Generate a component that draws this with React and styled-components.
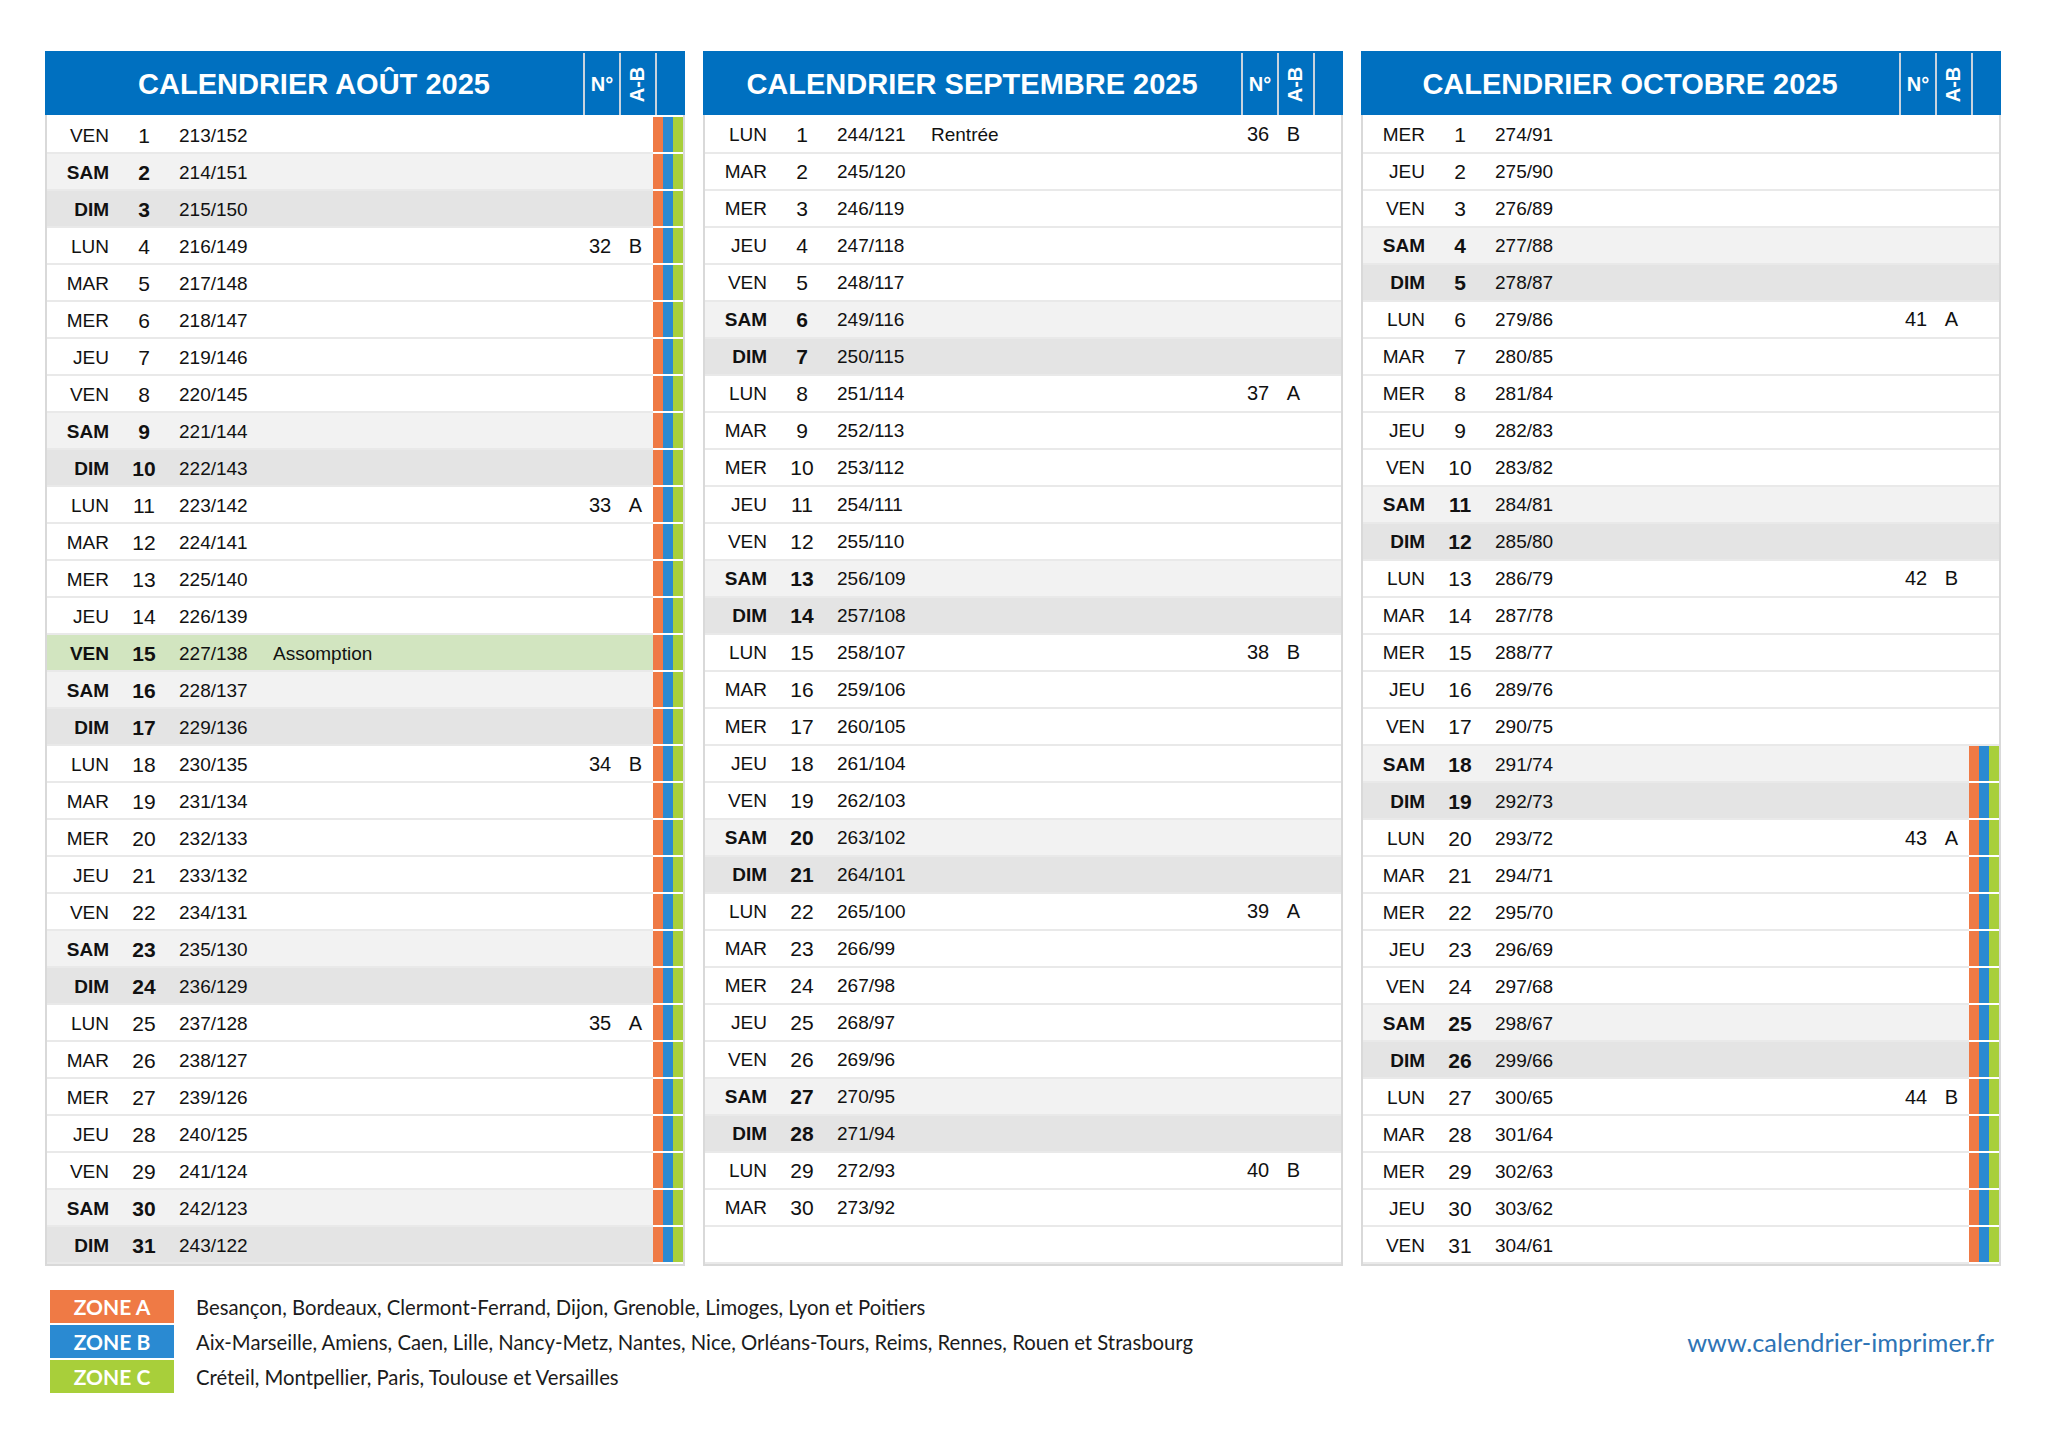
import React from 'react';
import styled, { createGlobalStyle } from 'styled-components';

const GlobalStyle = createGlobalStyle`
  html, body {
    margin: 0;
    padding: 0;
    background: #fff;
  }
  body {
    font-family: 'Liberation Sans', Arial, sans-serif;
    color: #111;
  }
`;

const ZONES = [
  { id: 'A', color: '#ef7a45', towns: 'Besançon, Bordeaux, Clermont-Ferrand, Dijon, Grenoble, Limoges, Lyon et Poitiers' },
  { id: 'B', color: '#2a8ad2', towns: 'Aix-Marseille, Amiens, Caen, Lille, Nancy-Metz, Nantes, Nice, Orléans-Tours, Reims, Rennes, Rouen et Strasbourg' },
  { id: 'C', color: '#a8cf3a', towns: 'Créteil, Montpellier, Paris, Toulouse et Versailles' },
];

const DAY_NAMES = ['DIM', 'LUN', 'MAR', 'MER', 'JEU', 'VEN', 'SAM'];

const MONTHS = [
  { title: 'CALENDRIER AOÛT 2025', length: 31, firstDow: 5, firstDoy: 213, events: { 15: { label: 'Assomption', holiday: true } }, vacation: () => true },
  { title: 'CALENDRIER SEPTEMBRE 2025', length: 30, firstDow: 1, firstDoy: 244, events: { 1: { label: 'Rentrée' } }, vacation: () => false },
  { title: 'CALENDRIER OCTOBRE 2025', length: 31, firstDow: 3, firstDoy: 274, events: {}, vacation: (d) => d >= 18 },
];

const Page = styled.div`
  width: 2048px;
  height: 1448px;
  box-sizing: border-box;
  padding: 51px 0 0 45px;
`;

const Months = styled.div`
  display: flex;
  gap: 18px;
`;

const Panel = styled.section`
  width: 640px;
  display: flex;
  flex-direction: column;
`;

const Header = styled.header`
  display: grid;
  grid-template-columns: 538px 36px 36px 1fr;
  height: 64px;
  box-sizing: border-box;
  padding-top: 2px;
  background: #0070c0;
  color: #fff;
  font-weight: bold;
`;

const HeadCell = styled.div`
  display: flex;
  align-items: center;
  justify-content: center;
  border-left: ${(p) => (p.$divider ? '2px solid #c9d3de' : 'none')};
  font-size: ${(p) => (p.$title ? '29px' : '20px')};
`;

const Vertical = styled.span`
  display: inline-block;
  transform: rotate(-90deg);
  white-space: nowrap;
`;

const Body = styled.div`
  border: 2px solid #d9d9d9;
  border-top: none;
  padding-top: 2px;
  background: #fff;
`;

const ROW_BG = { sat: '#f2f2f2', sun: '#e4e4e4', holiday: '#d2e5c0', normal: '#fff' };

const Row = styled.div`
  display: grid;
  grid-template-columns: 62px 70px 94px 1fr 36px 35px 30px;
  height: 37px;
  box-sizing: border-box;
  padding-bottom: 2px;
  background: ${(p) => ROW_BG[p.$kind]};
  box-shadow: inset 0 -2px 0 #e9e9e9;
  font-weight: ${(p) => (p.$kind === 'normal' ? 'normal' : 'bold')};
`;

const Cell = styled.div`
  display: flex;
  align-items: center;
  justify-content: ${(p) => p.$align || 'flex-start'};
  font-size: ${(p) => p.$size || '19px'};
  font-weight: ${(p) => (p.$plain ? 'normal' : 'inherit')};
  white-space: nowrap;
`;

const Stripes = styled.div`
  display: flex;
  height: 37px;
  box-sizing: border-box;
  border-bottom: 2px solid #fff;
`;

const Stripe = styled.span`
  width: 10px;
  background: ${(p) => p.$color};
`;

const Footer = styled.footer`
  width: 1956px;
  box-sizing: border-box;
  display: flex;
  justify-content: space-between;
  align-items: center;
  margin-top: 24px;
  padding: 0 7px 0 5px;
`;

const Zones = styled.div`
  display: flex;
  flex-direction: column;
  gap: 2px;
`;

const ZoneRow = styled.div`
  display: flex;
  align-items: center;
  gap: 22px;
  height: 33px;
`;

const ZoneBadge = styled.div`
  width: 124px;
  height: 33px;
  display: flex;
  align-items: center;
  justify-content: center;
  background: ${(p) => p.$color};
  color: #fff;
  font-family: Lato, 'Open Sans', sans-serif;
  font-weight: bold;
  font-size: 21px;
`;

const ZoneText = styled.span`
  font-family: Lato, 'Open Sans', sans-serif;
  font-size: 20.3px;
  color: #1b1b1b;
`;

const Site = styled.span`
  font-family: Lato, 'Open Sans', sans-serif;
  font-size: 25.3px;
  color: #2e74b5;
`;

const DayRow = ({ month, day }) => {
  if (day > month.length) {
    return <Row $kind="normal" />;
  }
  const dow = (month.firstDow + day - 1) % 7;
  const doy = month.firstDoy + day - 1;
  const event = month.events[day];
  let kind = 'normal';
  if (event && event.holiday) kind = 'holiday';
  else if (dow === 6) kind = 'sat';
  else if (dow === 0) kind = 'sun';
  const week = dow === 1 ? Math.floor((doy - 1 + 10) / 7) : null;

  return (
    <Row $kind={kind}>
      <Cell $align="flex-end">{DAY_NAMES[dow]}</Cell>
      <Cell $align="center" $size="21px">{day}</Cell>
      <Cell $plain>{doy}/{365 - doy}</Cell>
      <Cell $plain>{event ? event.label : ''}</Cell>
      <Cell $plain $align="center" $size="20px">{week}</Cell>
      <Cell $plain $align="center" $size="20px">{week ? (week % 2 === 0 ? 'B' : 'A') : ''}</Cell>
      {month.vacation(day) ? (
        <Stripes>
          {ZONES.map((z) => (
            <Stripe key={z.id} $color={z.color} />
          ))}
        </Stripes>
      ) : (
        <div />
      )}
    </Row>
  );
};

const MonthPanel = ({ month }) => {
  const days = Array.from({ length: 31 }, (_, i) => i + 1);
  return (
    <Panel>
      <Header>
        <HeadCell $title>{month.title}</HeadCell>
        <HeadCell $divider>N°</HeadCell>
        <HeadCell $divider>
          <Vertical>A-B</Vertical>
        </HeadCell>
        <HeadCell $divider />
      </Header>
      <Body>
        {days.map((d) => (
          <DayRow key={d} month={month} day={d} />
        ))}
      </Body>
    </Panel>
  );
};

export default function App() {
  return (
    <>
      <GlobalStyle />
      <Page>
        <Months>
          {MONTHS.map((m) => (
            <MonthPanel key={m.title} month={m} />
          ))}
        </Months>
        <Footer>
          <Zones>
            {ZONES.map((z) => (
              <ZoneRow key={z.id}>
                <ZoneBadge $color={z.color}>ZONE {z.id}</ZoneBadge>
                <ZoneText>{z.towns}</ZoneText>
              </ZoneRow>
            ))}
          </Zones>
          <Site>www.calendrier-imprimer.fr</Site>
        </Footer>
      </Page>
    </>
  );
}
